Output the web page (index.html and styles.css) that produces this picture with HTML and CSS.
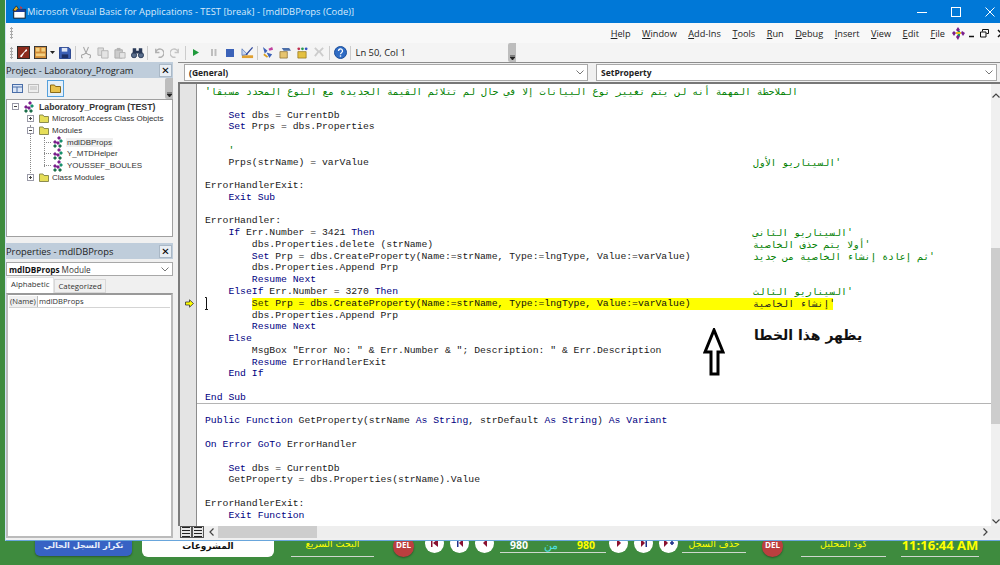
FILE: index.html
```html
<!DOCTYPE html>
<html lang="en">
<head>
<meta charset="utf-8">
<title>Microsoft Visual Basic for Applications</title>
<link rel="stylesheet" href="styles.css">
</head>
<body>
<div class="desktop">
  <div class="window">
    <header class="titlebar">
      <svg class="app-icon" width="14" height="14" viewBox="0 0 16 16"><rect x="2" y="5" width="13" height="10" fill="#fff" stroke="#111"/><rect x="2" y="5" width="13" height="3" fill="#1a3f9c"/><path d="M1 6l4-5 2 3-3 3z" fill="#e8b020" stroke="#111" stroke-width=".7"/><path d="M9 1l3 2-2 2z" fill="#d33"/></svg>
      <span class="title-text">Microsoft Visual Basic for Applications - TEST [break] - [mdlDBProps (Code)]</span>
      <div class="win-btns">
        <svg width="10" height="10" viewBox="0 0 10 10"><path d="M0 5.500h10" stroke="#fff"/></svg>
        <svg width="10" height="10" viewBox="0 0 10 10"><rect x=".5" y=".5" width="9" height="9" fill="none" stroke="#fff"/></svg>
        <svg width="10" height="10" viewBox="0 0 10 10"><path d="M.5.5l9 9M9.500.5l-9 9" stroke="#fff"/></svg>
      </div>
    </header>
    <div class="menubar">
      <div class="grip"></div>
      <nav class="menus">
        <span><u>H</u>elp</span><span><u>W</u>indow</span><span><u>A</u>dd-Ins</span><span><u>T</u>ools</span><span><u>R</u>un</span><span><u>D</u>ebug</span><span><u>I</u>nsert</span><span><u>V</u>iew</span><span><u>E</u>dit</span><span><u>F</u>ile</span>
      </nav>
      <svg class="mod-icon" width="13" height="13" viewBox="0 0 13 13"><path d="M6 0l2 3-2 2-2-2zM2 4l2 2-2 3-2-3zM10 4l3 2-2 3-2-3zM6 7l2 2-2 4-2-3z" fill="#7a1f8c"/><path d="M6 4h2v5H6z" fill="#18906c"/><path d="M4 5h5v2H4z" fill="#e8c020"/></svg>
      <div class="mdi-btns">
        <svg width="9" height="9" viewBox="0 0 9 9"><path d="M1 7.500h5" stroke="#111" stroke-width="1.500"/></svg>
        <svg width="9" height="9" viewBox="0 0 9 9"><path d="M2.500 2.500V.5h6v4h-2M.5 3h5.500v5H.5z" fill="none" stroke="#111"/></svg>
        <svg class="mdi-x" width="9" height="9" viewBox="0 0 9 9"><path d="M1 1l7 7M8 1L1 8" stroke="#111" stroke-width="1.500"/></svg>
      </div>
    </div>
    <div class="toolbar">
      <div class="grip"></div>
      <span class="slot"><svg width="13" height="13" viewBox="0 0 14 14"><rect x=".5" y=".5" width="13" height="13" fill="#8c2b1c" stroke="#222"/><path d="M3 11l5-5 2-3 1 2-3 2-3 5z" fill="#fff"/></svg></span>
      <span class="slot"><svg width="13" height="13" viewBox="0 0 14 14"><rect x=".5" y=".5" width="13" height="13" fill="#d08a35" stroke="#333"/><rect x="2" y="2" width="4" height="4" fill="#f4d080"/><rect x="8" y="2" width="4" height="4" fill="#f4d080"/><rect x="2" y="8" width="10" height="3" fill="#f4d080"/></svg></span>
      <span class="slot-drop"><svg width="5" height="4" viewBox="0 0 5 4"><path d="M0 0h5L2.500 3z" fill="#222"/></svg></span>
      <span class="slot"><svg width="12" height="12" viewBox="0 0 13 13"><path d="M.5.5h10l2 2v10H.5z" fill="#3b5fb5" stroke="#24408a"/><rect x="3" y="1" width="6" height="4" fill="#dfe6f5"/><rect x="3" y="8" width="7" height="4" fill="#1c2f66"/></svg></span>
      <i class="sep"></i>
      <span class="slot"><svg width="10" height="13" viewBox="0 0 12 13"><path d="M3 0l3 7 3-7M2 13a2 2 0 1 1 1-4l3-2 3 2a2 2 0 1 1 1 4" fill="none" stroke="#a8a8a8" stroke-width="1.300"/></svg></span>
      <span class="slot"><svg width="12" height="12" viewBox="0 0 13 13"><path d="M1 1h6v8H1z" fill="#ddd" stroke="#b4b4b4"/><path d="M5 4h7v8H5z" fill="#e4e4e4" stroke="#b4b4b4"/></svg></span>
      <span class="slot"><svg width="12" height="12" viewBox="0 0 13 13"><path d="M1 3h8v9H1z" fill="#ccc" stroke="#aaa"/><path d="M3 1h4v3H3z" fill="#b4b4b4"/><path d="M6 6h6v6H6z" fill="#e4e4e4" stroke="#b4b4b4"/></svg></span>
      <span class="slot"><svg width="13" height="12" viewBox="0 0 15 13"><circle cx="3.500" cy="9" r="3" fill="#5a6e8c" stroke="#2a3a58"/><circle cx="11.500" cy="9" r="3" fill="#5a6e8c" stroke="#2a3a58"/><path d="M2 1h4v6H2zM9 1h4v6H9zM6 4h3v3H6z" fill="#2a3a58"/></svg></span>
      <i class="sep"></i>
      <span class="slot"><svg width="11" height="11" viewBox="0 0 12 12"><path d="M3 2v4h4M3 6a4.500 4.500 0 1 1 3 5" fill="none" stroke="#b0b0b0" stroke-width="1.500"/></svg></span>
      <span class="slot"><svg width="11" height="11" viewBox="0 0 12 12"><path d="M9 2v4H5M9 6a4.500 4.500 0 1 0-3 5" fill="none" stroke="#c4c4c4" stroke-width="1.500"/></svg></span>
      <i class="sep"></i>
      <span class="slot"><svg width="8" height="9" viewBox="0 0 8 9"><path d="M1 1l6 3.500L1 8z" fill="#1f9a3c"/></svg></span>
      <span class="slot"><svg width="7" height="9" viewBox="0 0 7 9"><path d="M1 1h2v7H1zM4.500 1h2v7h-2z" fill="#bdbdbd"/></svg></span>
      <span class="slot"><svg width="8" height="8" viewBox="0 0 8 8"><rect width="8" height="8" fill="#3b62b8"/></svg></span>
      <span class="slot"><svg width="13" height="13" viewBox="0 0 14 14"><path d="M1 13h12v-3H1z" fill="#e0a030"/><path d="M1 3v7l6-1z" fill="#c8d4ee" stroke="#4468b0" stroke-width=".7"/><path d="M5 9l7-8 1 1-7 8z" fill="#30489a"/></svg></span>
      <i class="sep"></i>
      <span class="slot"><svg width="12" height="13" viewBox="0 0 13 14"><path d="M1 1l5 4-3 3zM5 7l6 2-3 4z" fill="#3d62b8"/><path d="M7 3l4-2 1 3-4 1z" fill="#c040a0"/><path d="M2 9l4 3" stroke="#d8a020" stroke-width="2"/></svg></span>
      <span class="slot"><svg width="12" height="12" viewBox="0 0 13 13"><path d="M1 5h8v7H1z" fill="#e6c470" stroke="#806020" stroke-width=".7"/><path d="M3 1h8l2 3H5z" fill="#4c6ea8"/></svg></span>
      <span class="slot"><svg width="12" height="12" viewBox="0 0 13 13"><path d="M2 5h9v7H2z" fill="#e4c040" stroke="#8a6a10" stroke-width=".7"/><circle cx="3" cy="2" r="1.500" fill="#c03050"/><circle cx="7" cy="2" r="1.500" fill="#2a9a50"/><circle cx="11" cy="2" r="1.500" fill="#3050c0"/></svg></span>
      <span class="slot"><svg width="12" height="11" viewBox="0 0 13 12"><path d="M2 1l4 4-4 5M11 1L7 5l4 5" fill="none" stroke="#ccc" stroke-width="2"/></svg></span>
      <i class="sep"></i>
      <span class="slot"><svg width="13" height="13" viewBox="0 0 13 13"><circle cx="6.500" cy="6.500" r="6" fill="#2f6cc4" stroke="#1c4e9a"/><path d="M4.500 5a2 2 0 1 1 3 1.700c-.7.400-1 .8-1 1.500" fill="none" stroke="#fff" stroke-width="1.300"/><rect x="5.800" y="9.300" width="1.400" height="1.400" fill="#fff"/></svg></span>
      <i class="sep"></i>
      <span class="pos">Ln 50, Col 1</span>
      <div class="tb-end"><svg width="5" height="6" viewBox="0 0 5 6"><path d="M0 0h5M0 2h5L2.500 5z" stroke="#222" stroke-width=".8" fill="#222"/></svg></div>
    </div>
    <div class="workspace">
      <aside class="side">
        <section class="panel project">
          <div class="panel-title"><span>Project - Laboratory_Program</span><b class="close">✕</b></div>
          <div class="proj-tools">
            <svg width="11" height="9" viewBox="0 0 11 9"><rect x=".5" y=".5" width="10" height="8" fill="#dbe6f6" stroke="#4a6ea8"/><path d="M1 3h9M5 3v5" stroke="#4a6ea8"/></svg>
            <svg width="11" height="9" viewBox="0 0 11 9"><rect x=".5" y=".5" width="10" height="8" fill="#eee" stroke="#bbb"/><path d="M2 3h7M2 5h7" stroke="#bbb"/></svg>
            <span class="folder-btn"><svg width="11" height="9" viewBox="0 0 11 9"><path d="M.5 8.500V1h4l1 1.500h5v6z" fill="#e8c24c" stroke="#8a6a18"/></svg></span>
            <div class="tb-end small"><svg width="5" height="6" viewBox="0 0 5 6"><path d="M0 0h5M0 2h5L2.500 5z" stroke="#222" stroke-width=".8" fill="#222"/></svg></div>
          </div>
          <div class="tree">
            <i class="vline v-a"></i><i class="vline v-b"></i>
            <div class="node root"><i class="box minus"></i><svg class="mod" width="12" height="12" viewBox="0 0 12 12"><use href="#modglyph"/></svg><b>Laboratory_Program (TEST)</b></div>
            <div class="node d1"><i class="box plus"></i><svg class="fold" width="10" height="9" viewBox="0 0 10 9"><use href="#foldglyph"/></svg><span>Microsoft Access Class Objects</span></div>
            <div class="node d1"><i class="box minus"></i><svg class="fold" width="10" height="9" viewBox="0 0 10 9"><use href="#foldglyph"/></svg><span>Modules</span></div>
            <div class="node d2"><svg class="mod" width="12" height="12" viewBox="0 0 12 12"><use href="#modglyph"/></svg><span class="sel">mdlDBProps</span></div>
            <div class="node d2"><svg class="mod" width="12" height="12" viewBox="0 0 12 12"><use href="#modglyph"/></svg><span>Y_MTDHelper</span></div>
            <div class="node d2"><svg class="mod" width="12" height="12" viewBox="0 0 12 12"><use href="#modglyph"/></svg><span>YOUSSEF_BOULES</span></div>
            <div class="node d1"><i class="box plus"></i><svg class="fold" width="10" height="9" viewBox="0 0 10 9"><use href="#foldglyph"/></svg><span>Class Modules</span></div>
          </div>
        </section>
        <section class="panel props">
          <div class="panel-title"><span>Properties - mdlDBProps</span><b class="close">✕</b></div>
          <div class="prop-combo"><span><b>mdlDBProps</b> Module</span><svg width="8" height="5" viewBox="0 0 8 5"><path d="M.5.5L4 4 7.500.5" fill="none" stroke="#777"/></svg></div>
          <div class="tabs"><span class="tab on">Alphabetic</span><span class="tab">Categorized</span></div>
          <div class="grid-box">
            <div class="grid-row"><span class="g-key">(Name)</span><span class="g-val">mdlDBProps</span></div>
          </div>
        </section>
      </aside>
      <main class="code-pane">
        <div class="combos">
          <div class="combo"><span>(General)</span><svg width="8" height="5" viewBox="0 0 8 5"><path d="M.5.5L4 4 7.500.5" fill="none" stroke="#777"/></svg></div>
          <div class="combo"><span>SetProperty</span><svg width="8" height="5" viewBox="0 0 8 5"><path d="M.5.5L4 4 7.500.5" fill="none" stroke="#777"/></svg></div>
        </div>
        <div class="editor">
          <div class="gutter">
            <svg class="exec" width="9" height="9" viewBox="0 0 9 9"><path d="M.5 3h4V.8L8.500 4.500 4.500 8.200V6h-4z" fill="#ffff00" stroke="#333" stroke-width=".8"/></svg>
          </div>
          <div class="code-col">
            <div class="code">
              <div class="l wide">'<span class="ar first" dir="rtl">الملاحظة المهمة أنه لن يتم تغيير نوع البيانات إلا في حال لم تتلائم القيمة الجديدة مع النوع المحدد مسبقا</span></div>
              <div class="l"></div>
              <div class="l in1"><span class="k">Set</span> dbs = CurrentDb</div>
              <div class="l in1"><span class="k">Set</span> Prps = dbs.Properties</div>
              <div class="l"></div>
              <div class="l in1 g">'</div>
              <div class="l cm in1"><span class="c">Prps(strName) = varValue</span><span class="ar" dir="rtl">'السيناريو الأول</span></div>
              <div class="l"></div>
              <div class="l">ErrorHandlerExit:</div>
              <div class="l in1"><span class="k">Exit Sub</span></div>
              <div class="l"></div>
              <div class="l">ErrorHandler:</div>
              <div class="l cm in1"><span class="c"><span class="k">If</span> Err.Number = 3421 <span class="k">Then</span></span><span class="ar" dir="rtl">'السيناريو الثاني</span></div>
              <div class="l cm in2"><span class="c">dbs.Properties.delete (strName)</span><span class="ar" dir="rtl">'أولا يتم حذف الخاصية</span></div>
              <div class="l cm in2"><span class="c"><span class="k">Set</span> Prp = dbs.CreateProperty(Name:=strName, Type:=lngType, Value:=varValue)</span><span class="ar" dir="rtl">'ثم إعادة إنشاء الخاصية من جديد</span></div>
              <div class="l in2">dbs.Properties.Append Prp</div>
              <div class="l in2"><span class="k">Resume Next</span></div>
              <div class="l cm in1"><span class="c"><span class="k">ElseIf</span> Err.Number = 3270 <span class="k">Then</span></span><span class="ar" dir="rtl">'السيناريو الثالث</span></div>
              <div class="l cm in2"><span class="c hl"><span class="dk">Set</span> Prp = dbs.CreateProperty(Name:=strName, Type:=lngType, Value:=varValue)</span><span class="ar hl-ar" dir="rtl">'إنشاء الخاصية</span></div>
              <div class="l in2">dbs.Properties.Append Prp</div>
              <div class="l in2"><span class="k">Resume Next</span></div>
              <div class="l in1"><span class="k">Else</span></div>
              <div class="l in2">MsgBox "Error No: " &amp; Err.Number &amp; "; Description: " &amp; Err.Description</div>
              <div class="l in2"><span class="k">Resume</span> ErrorHandlerExit</div>
              <div class="l in1"><span class="k">End If</span></div>
              <div class="l"></div>
              <div class="l"><span class="k">End Sub</span></div>
              <div class="divider"></div>
              <div class="l"></div>
              <div class="l"><span class="k">Public Function</span> GetProperty(strName <span class="k">As String</span>, strDefault <span class="k">As String</span>) <span class="k">As Variant</span></div>
              <div class="l"></div>
              <div class="l"><span class="k">On Error GoTo</span> ErrorHandler</div>
              <div class="l"></div>
              <div class="l in1"><span class="k">Set</span> dbs = CurrentDb</div>
              <div class="l in1">GetProperty = dbs.Properties(strName).Value</div>
              <div class="l"></div>
              <div class="l">ErrorHandlerExit:</div>
              <div class="l in1"><span class="k">Exit Function</span></div>
            </div>
            <svg class="ibeam" width="5" height="13" viewBox="0 0 5 13"><path d="M1 .5h1.500v12H1M2.500 12.500H4" fill="none" stroke="#111"/></svg>
            <div class="note">
              <svg width="22" height="48" viewBox="0 0 22 48"><path d="M11 2L2 24h6v22h7V24h5z" fill="#fff" stroke="#000" stroke-width="3"/></svg>
              <span class="note-text" dir="rtl">يظهر هذا الخطا</span>
            </div>
            <div class="vscroll"><svg width="8" height="5" viewBox="0 0 8 5"><path d="M.5 4.500L4 1l3.500 3.500" fill="none" stroke="#444" stroke-width="1.200"/></svg><i class="thumb"></i><i class="spacer"></i><svg width="8" height="5" viewBox="0 0 8 5"><path d="M.5.5L4 4 7.500.5" fill="none" stroke="#444" stroke-width="1.200"/></svg></div>
          </div>
        </div>
        <div class="hbar">
          <div class="views"><i class="v1"></i><i class="v2"></i></div>
          <svg class="ha" width="5" height="8" viewBox="0 0 5 8"><path d="M4.500.5L1 4l3.500 3.500" fill="none" stroke="#444" stroke-width="1.200"/></svg>
          <i class="hthumb"></i>
          <svg class="ha end" width="5" height="8" viewBox="0 0 5 8"><path d="M.5.5L4 4 .5 7.500" fill="none" stroke="#444" stroke-width="1.200"/></svg>
          <i class="corner"></i>
        </div>
      </main>
    </div>
  </div>
  <footer class="appbar">
    <span class="btn-blue">تكرار السجل الحالي</span>
    <span class="btn-white">المشروعات</span>
    <span class="field f1">البحث السريع</span>
    <span class="del d-a">DEL</span>
    <span class="nav">
      <i><svg width="10" height="8" viewBox="0 0 10 8"><path d="M1 0h1.500v8H1zM8 0L3 4l5 4z" fill="#8a1030"/></svg></i>
      <i><svg width="10" height="8" viewBox="0 0 10 8"><path d="M2 0h1.500v8H2z" fill="#20308a"/><path d="M8 0L4 4l4 4z" fill="#8a1030"/></svg></i>
      <i><svg width="10" height="8" viewBox="0 0 10 8"><path d="M7 0L3 4l4 4z" fill="#8a1030"/></svg></i>
    </span>
    <span class="count"><span>980</span><span class="cy">من</span><span class="yl">980</span></span>
    <span class="nav n2">
      <i><svg width="10" height="8" viewBox="0 0 10 8"><path d="M3 0l4 4-4 4z" fill="#8a1030"/></svg></i>
      <i><svg width="10" height="8" viewBox="0 0 10 8"><path d="M2 0l4 4-4 4z" fill="#8a1030"/><path d="M6.500 0H8v8H6.500z" fill="#20308a"/></svg></i>
      <i><svg width="12" height="8" viewBox="0 0 12 8"><path d="M1 0l4 4-4 4z" fill="#8a1030"/><path d="M7 3.200h4v1.600H7zM8.200 2h1.600v4H8.200z" fill="#20308a"/></svg></i>
    </span>
    <span class="field f2">حذف السجل</span>
    <span class="del d-b">DEL</span>
    <span class="field f3">كود المحليل</span>
    <span class="field clock">11:16:44 AM</span>
  </footer>
</div>
<svg class="defs" width="0" height="0">
  <defs>
    <g id="modglyph"><path d="M7 0l2 2-2 2-2-2zM3 4l2 2-2 2-2-2zM6 5l2 2-2 2-2-2z" fill="#7a1f8c"/><path d="M9 3l2 2-2 2-2-2z" fill="#18906c"/><path d="M3 8l2 2-2 2-2-2zM8 8l2 2-2 2-2-2z" fill="#1b6f4a"/></g>
    <g id="foldglyph"><path d="M.5 8.500V1h3.500l1 1.500h4.500v6z" fill="#e6de58" stroke="#8c8c50"/></g>
  </defs>
</svg>
</body>
</html>
```

FILE: styles.css
```css
* { box-sizing: border-box; }
html, body { margin: 0; height: 100%; }
body { width: 1000px; height: 565px; overflow: hidden; background: #3e8b3e; font-family: "Liberation Sans", Arial, sans-serif; }
.defs { position: absolute; }
.desktop { height: 565px; display: flex; flex-direction: column; padding-left: 5px; background: #3e8b3e; }
.window { height: 541px; flex: none; display: flex; flex-direction: column; background: #f0f0f0; border-left: 1px solid #cfe3f5; border-bottom: 1px solid #69a6dc; }

.titlebar { height: 23px; flex: none; background: #0078d7; display: flex; align-items: center; padding-left: 6px; color: #fff; }
.app-icon { margin-right: 1px; flex: none; }
.title-text { font: 9.400px "Open Sans", "Liberation Sans", sans-serif; color: #d8eafa; flex: 1; white-space: nowrap; }
.win-btns { display: flex; gap: 24px; margin-right: 5px; align-items: center; }

.menubar { height: 20px; flex: none; background: #f8f8f8; display: flex; align-items: center; padding: 0 0 0 4px; }
.grip { width: 3px; height: 12px; flex: none; background-image: radial-gradient(#aaa 50%, transparent 55%); background-size: 3px 3px; }
.menus { margin-left: auto; display: flex; gap: 11.500px; font: 9.200px "Open Sans", "Liberation Sans", sans-serif; color: #222; margin-right: 7px; }
.mod-icon { margin-right: 3px; flex: none; }
.mdi-btns { display: flex; gap: 3px; margin-right: -6px; flex: none; }
.mdi-x { margin-left: 5px; }

.toolbar { height: 19px; flex: none; background: #f4f4f4; display: flex; align-items: center; padding-left: 4px; }
.toolbar .grip { margin-right: 1.500px; }
.slot { width: 17px; height: 17px; flex: none; display: flex; align-items: center; justify-content: center; }
.slot-drop { width: 8px; flex: none; display: flex; justify-content: center; }
.sep { width: 1px; height: 14px; background: #ccc; margin: 0 1.500px; flex: none; }
.pos { font: 9.400px "Open Sans", "Liberation Sans", sans-serif; color: #222; margin-left: 3px; white-space: nowrap; }
.tb-end { margin-left: auto; margin-right: 484px; width: 8px; height: 19px; background: #bdbdbd; border-radius: 2px 0 0 2px; display: flex; align-items: flex-end; justify-content: center; padding-bottom: 1px; flex: none; }
.tb-end.small { margin-right: 0; height: 21px; }

.workspace { flex: 1; min-height: 0; display: flex; background: #f0f0f0; padding-bottom: 2px; }
.side { width: 172px; flex: none; display: flex; flex-direction: column; padding-right: 5px; background: #f0f0f0; }
.panel-title { height: 16px; flex: none; background: #bfcddb; display: flex; align-items: center; justify-content: space-between; padding-right: 1px; font: 9.300px "Open Sans", "Liberation Sans", sans-serif; color: #222; white-space: nowrap; }
.close { width: 13px; height: 13px; border: 1px solid #aab8c6; background: #e8eef4; font: 700 10px/11px "DejaVu Sans", sans-serif; text-align: center; color: #000; }
.panel { display: flex; flex-direction: column; }
.project { height: 175px; flex: none; }
.proj-tools { height: 21px; flex: none; display: flex; align-items: center; gap: 5px; padding-left: 6px; }
.folder-btn { width: 17px; height: 17px; border: 1px solid #55a0dc; background: #e4f0fa; display: flex; align-items: center; justify-content: center; margin-left: 3px; }
.tree { flex: 1; background: #fff; border: 1px solid #a0a0a0; padding-top: 1px; font: 8px "Liberation Sans", sans-serif; color: #333; position: relative; }
.vline { position: absolute; width: 0; border-left: 1px dotted #888; }
.v-a { left: 23px; top: 25px; height: 50px; }
.v-b { left: 37px; top: 37px; height: 30px; }
.node { height: 11.770px; display: flex; align-items: center; white-space: nowrap; position: relative; }
.node b { font-weight: 700; color: #333; font-size: 8.700px; margin-left: 4px; }
.node span { margin-left: 3px; }
.root { padding-left: 5px; }
.d1 { padding-left: 20px; }
.d2 { padding-left: 45px; }
.d2 span { margin-left: 2px; padding: 0 1px; }
.d2::before { content: ""; position: absolute; left: 37px; width: 7px; border-top: 1px dotted #888; }
.sel { background: #f0f0f0; }
.box { width: 7px; height: 7px; border: 1px solid #9a9aa8; background: #fff; margin-right: 4px; flex: none; position: relative; }
.d1 .box { margin-right: 5px; }
.box::before { content: ""; position: absolute; left: 1px; right: 1px; top: 2px; height: 1px; background: #444; }
.plus::after { content: ""; position: absolute; top: 1px; bottom: 1px; left: 2px; width: 1px; background: #444; }
.props { margin-top: 6px; flex: 1; min-height: 0; }
.prop-combo { margin-top: 3px; height: 14px; flex: none; background: #fff; border: 1px solid #a8a8a8; display: flex; align-items: center; justify-content: space-between; padding: 0 3px 0 2px; font: 8.200px "Open Sans", "Liberation Sans", sans-serif; color: #333; }
.prop-combo b { color: #111; }
.tabs { display: flex; height: 16px; margin-top: 1px; flex: none; font: 7.800px "Open Sans", "Liberation Sans", sans-serif; color: #333; align-items: flex-end; }
.tab { padding: 1px 3px 0; height: 14px; border: 1px solid #d8d8d8; background: #f0f0f0; }
.tab.on { background: #fff; height: 16px; padding: 1px 4px; border-bottom: 0; border-color: #e4e4e4; }
.grid-box { flex: 1; background: #fff; border: 2px solid #bbb; border-top-color: #999; padding: 1px 1px; margin-bottom: 0; }
.grid-row { display: flex; height: 12px; font: 7.600px/11px "Open Sans", "Liberation Sans", sans-serif; color: #333; border-bottom: 1px solid #d4d4d4; white-space: nowrap; }
.g-key { width: 29px; flex: none; background: #f0f0f0; border-right: 1px solid #bbb; padding-left: 1px; }
.g-val { padding-left: 1px; }

.code-pane { flex: 1; min-width: 0; display: flex; flex-direction: column; background: #f0f0f0; }
.combos { height: 22px; flex: none; display: flex; gap: 8px; padding: 1px 3px 1px 6px; border-top: 1px solid #8c8c8c; border-bottom: 2px solid #777; }
.combo { flex: 1; background: #fff; border: 1px solid #a8a8a8; display: flex; align-items: center; justify-content: space-between; padding: 0 3px 0 4px; font: 700 8.500px "Open Sans", "Liberation Sans", sans-serif; color: #222; }
.combo:first-child { flex: 0 0 404px; }
.editor { flex: 1; min-height: 0; display: flex; }
.gutter { width: 18px; flex: none; background: #e4e4e4; border-left: 2px solid #7c7c7c; position: relative; }
.exec { position: absolute; left: 5px; top: 215px; }
.code-col { flex: 1; min-width: 0; background: #fff; position: relative; border-left: 1px solid #8c8c8c; display: flex; }
.code { flex: 1; min-width: 0; padding: 2px 0 0 8px; font: 9.750px/11.770px "Liberation Mono", "Courier New", "DejaVu Sans Mono", monospace; color: #1a1a1a; overflow: hidden; }
.k { color: #00007f; }
.dk { color: #333300; }
.l { height: 11.770px; white-space: pre; }
.in1 { padding-left: 23.400px; }
.in2 { padding-left: 46.800px; }
.g { color: #008000; }
.wide { color: #008000; display: flex; }
.ar { color: #008000; font-family: "DejaVu Sans Mono", "DejaVu Sans", monospace; font-size: 9.750px; }
.cm { display: flex; position: relative; }
.cm .ar { position: absolute; left: 548px; top: 0; white-space: nowrap; }
.hl { background: #ffff00; display: block; width: 581px; color: #111; }
.hl-ar { color: #222; }
.divider { height: 1px; margin-bottom: -1px; background: #b4b4b4; margin-left: -8px; position: relative; top: -1px; }
.ibeam { position: absolute; left: 7px; top: 213px; }
.note { position: absolute; left: 506px; top: 244px; display: flex; align-items: flex-start; gap: 29px; }
.note-text { font: 700 14px/20px "DejaVu Sans", sans-serif; color: #111; margin-top: -3px; white-space: nowrap; }
.vscroll { width: 9px; flex: none; background: #f0f0f0; display: flex; flex-direction: column; align-items: center; padding: 9px 0 2px; }
.vscroll svg { flex: none; }
.spacer { flex: 1; }
.thumb { height: 176px; width: 100%; flex: none; background: #cdcdcd; margin-top: 150px; }
.hbar { height: 12px; flex: none; display: flex; align-items: center; background: #eeeeee; }
.views { width: 24px; height: 12px; flex: none; display: flex; background: #e6e6e6; margin: 0 5px 0 2px; }
.views i { width: 12px; height: 12px; border: 1px solid #555; background-image: repeating-linear-gradient(#222 0 1px, transparent 1px 3px); background-size: 8px 100%; background-repeat: no-repeat; background-position: center; }
.ha { flex: none; }
.hthumb { width: 99px; height: 12px; background: #cdcdcd; margin-left: 4px; }
.ha.end { margin-left: auto; margin-right: 3px; }
.corner { width: 9px; height: 12px; flex: none; }

.appbar { flex: 1; display: flex; align-items: flex-start; overflow: hidden; margin-left: -5px; padding-left: 35px; white-space: nowrap; }
.appbar > * { flex: none; }
.btn-blue { width: 97px; height: 21px; margin-top: -6px; background: #3762c4; border-radius: 5px; color: #e8eefa; font: 700 8.200px/21px "DejaVu Sans", sans-serif; text-align: center; box-shadow: 0 1px 2px #2a5a2a; }
.btn-white { width: 132px; height: 22px; margin: -6px 0 0 10px; background: #fff; border-radius: 6px; color: #111; font: 700 9px/22px "DejaVu Sans", sans-serif; text-align: center; }
.field { color: #ffff00; font: 9.500px/14px "DejaVu Sans", sans-serif; text-align: center; border-bottom: 1px solid #cfd8cf; }
.f1 { width: 83px; margin: -4px 0 0 17px; height: 20px; }
.f2 { width: 64px; margin: -4px 0 0 4px; height: 16px; }
.f3 { width: 85px; margin: -4px 0 0 18px; height: 20px; }
.clock { width: 78px; margin: -4px 0 0 15px; height: 20px; font: 700 13px/17px "Open Sans", sans-serif; }
.del { width: 21px; height: 21px; border-radius: 50%; background: #bb3f3f; color: #fff; font: 700 8px/18px "Open Sans", sans-serif; text-align: center; margin-top: -5px; box-shadow: 0 1px 2px #2a5a2a; }
.d-a { margin-left: 19px; }
.d-b { margin-left: 16px; }
.nav { display: flex; gap: 6px; margin: -7px 0 0 11px; }
.nav i { width: 19px; height: 19px; border-radius: 50%; background: #fff; display: flex; justify-content: center; padding-top: 5px; }
.n2 { margin-left: 3px; }
.count { width: 106px; height: 16px; margin: -4px 0 0 6px; border-bottom: 1px solid #cfd8cf; display: flex; justify-content: space-between; padding: 0 11px 0 10px; font: 700 10.500px/16px "Open Sans", sans-serif; color: #fff; }
.cy { color: #4fe0e0; font-weight: 400; margin-right: 4px; }
.yl { color: #ffff00; }
```
